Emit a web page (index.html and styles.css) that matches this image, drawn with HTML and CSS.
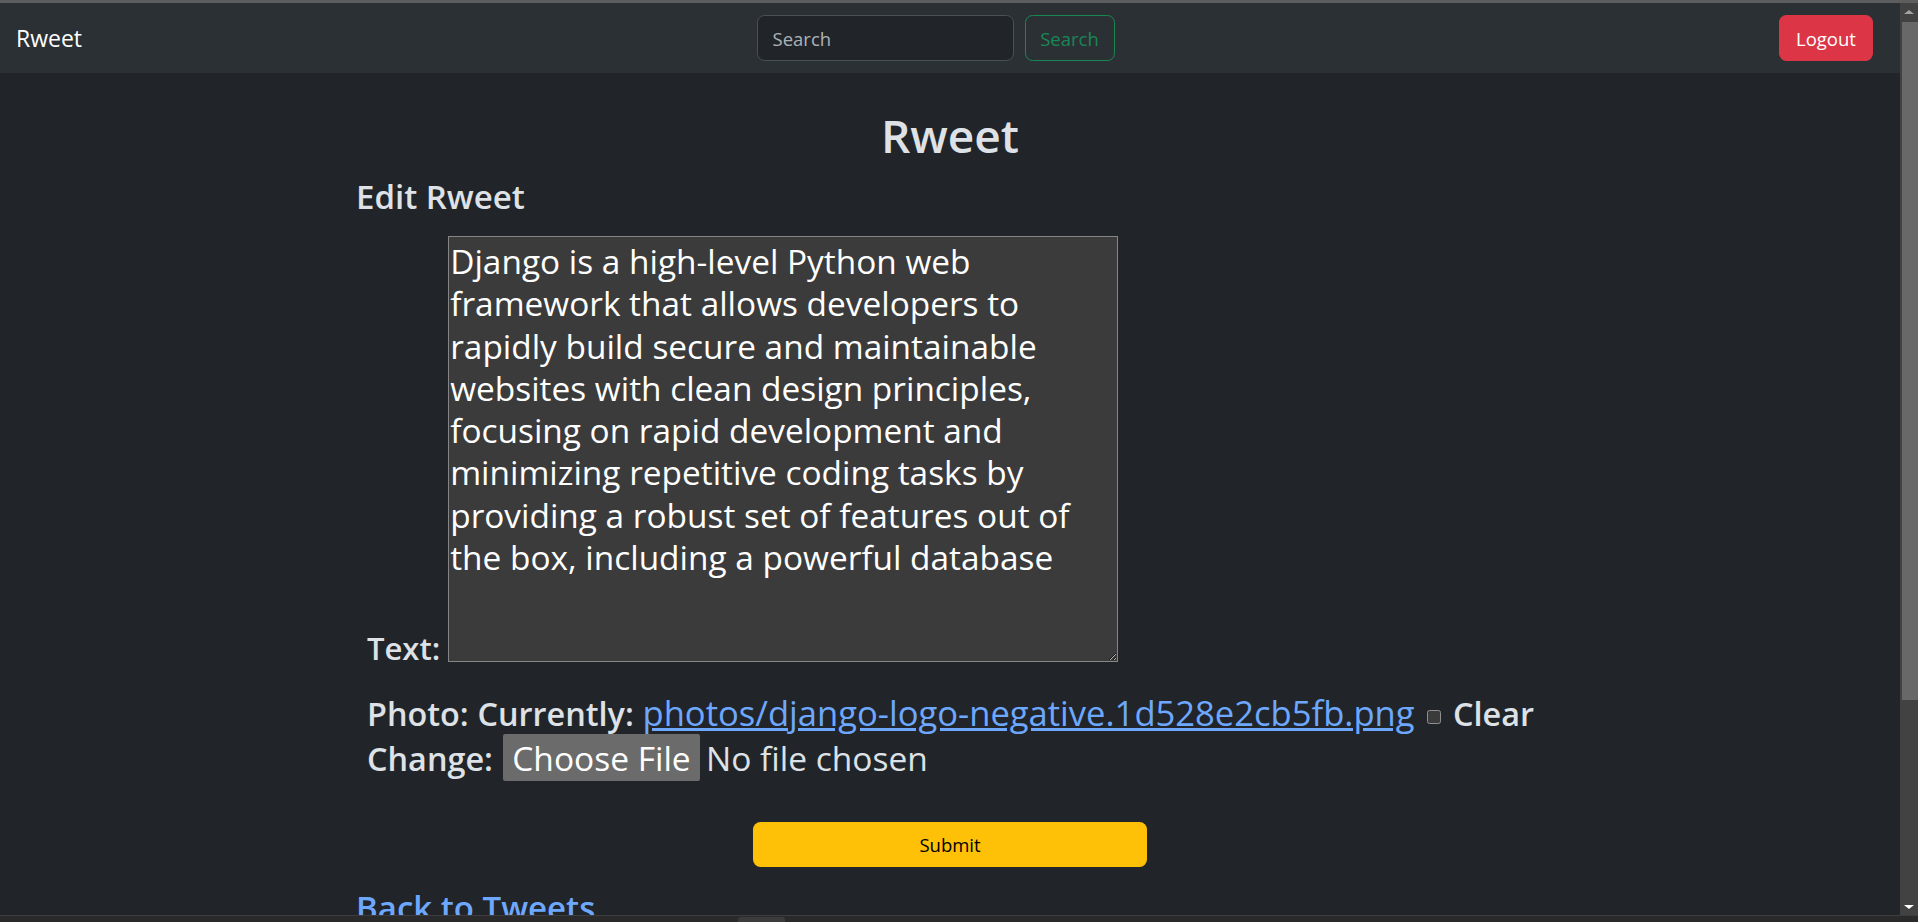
FILE: index.html
```html
<!DOCTYPE html>
<html lang="en">
<head>
<meta charset="utf-8">
<title>Rweet</title>
<link rel="stylesheet" href="styles.css">
</head>
<body>
<div class="screen">
  <div class="topline"></div>
  <div class="window">
    <div class="viewport">
      <nav class="navbar">
        <a class="brand" href="#">Rweet</a>
        <form class="search">
          <input class="search-input" type="text" placeholder="Search">
          <button class="search-btn" type="button">Search</button>
        </form>
        <button class="logout" type="button">Logout</button>
      </nav>
      <main class="page">
        <h1 class="heading">Rweet</h1>
        <h3 class="title">Edit Rweet</h3>
        <form class="edit-form">
          <div class="text-row">
            <label class="lbl" for="t">Text:</label>
            <textarea id="t" class="text-input">Django is a high-level Python web
framework that allows developers to
rapidly build secure and maintainable
websites with clean design principles,
focusing on rapid development and
minimizing repetitive coding tasks by
providing a robust set of features out of
the box, including a powerful database</textarea>
          </div>
          <div class="photo-line"><label class="lbl">Photo:</label> <span class="lbl">Currently:</span> <a class="file-link" href="#">photos/django-logo-negative.1d528e2cb5fb.png</a> <input class="clear-box" type="checkbox"> <label class="lbl">Clear</label></div>
          <div class="change-line">
            <span class="lbl">Change:</span>
            <span class="file-btn">Choose File</span>
            <span class="file-none">No file chosen</span>
          </div>
          <div class="submit-row">
            <button class="submit" type="button">Submit</button>
          </div>
        </form>
        <a class="back" href="#">Back to Tweets</a>
      </main>
    </div>
    <div class="scrollbar">
      <div class="sb-arrow sb-up"></div>
      <div class="sb-track"><div class="sb-thumb"></div></div>
      <div class="sb-arrow sb-down"></div>
    </div>
  </div>
  <div class="taskbar"><div class="task-tab"></div></div>
</div>
</body>
</html>
```

FILE: styles.css
```css
html, body {
  margin: 0;
  padding: 0;
  height: 100%;
  overflow: hidden;
  background: #212529;
}

.screen {
  width: 1918px;
  height: 922px;
  display: flex;
  flex-direction: column;
  font-family: "Open Sans", "Noto Sans", sans-serif;
}

.topline {
  flex: none;
  height: 3px;
  background: #5e5e5e;
}

.window {
  flex: 1;
  min-height: 0;
  display: flex;
}

.viewport {
  flex: 1;
  min-width: 0;
  overflow: hidden;
  background: #212529;
  color: #dee2e6;
}

/* navbar */
.navbar {
  height: 70px;
  background: #2b3035;
  display: flex;
  align-items: center;
  padding: 0 27px 0 16px;
}

.brand {
  font-size: 23px;
  line-height: 30px;
  color: #fff;
  text-decoration: none;
}

.search {
  display: flex;
  gap: 11px;
  margin: 0 auto;
  padding-left: 10px;
}

.search-input {
  width: 257px;
  height: 46px;
  box-sizing: border-box;
  background: #212529;
  border: 1px solid #495057;
  border-radius: 7.5px;
  padding: 0 15px;
  font-family: "Open Sans", sans-serif;
  font-size: 18.5px;
  color: #dee2e6;
  outline: none;
}

.search-input::placeholder {
  color: rgba(222, 226, 230, 0.75);
}

.search-btn {
  width: 90px;
  height: 46px;
  box-sizing: border-box;
  background: transparent;
  border: 1px solid #198754;
  border-radius: 7.5px;
  color: #198754;
  font-family: "Open Sans", sans-serif;
  font-size: 18.5px;
  padding: 0;
}

.logout {
  width: 94px;
  height: 46px;
  background: #dc3545;
  border: none;
  border-radius: 7.5px;
  color: #fff;
  font-family: "Open Sans", sans-serif;
  font-size: 18.5px;
  padding: 0;
}

/* page */
.page {
  width: 1188px;
  margin: 0 auto;
  padding-top: 32px;
}

.heading {
  margin: 0 0 12px;
  font-size: 46px;
  font-weight: 600;
  line-height: 60px;
  text-align: center;
}

.title {
  margin: 0 0 19px;
  font-size: 33px;
  font-weight: 600;
  line-height: 40px;
}

.edit-form {
  font-size: 33.5px;
  font-weight: 400;
}

.lbl {
  font-size: 32.4px;
  font-weight: 600;
}

.text-row {
  display: flex;
  align-items: flex-end;
  gap: 8px;
  margin-left: 11px;
}

.text-row .lbl {
  font-size: 31px;
  line-height: 28px;
}

.text-input {
  display: block;
  margin: 0;
  width: 670px;
  height: 426px;
  box-sizing: border-box;
  background: #3b3b3b;
  color: #fff;
  border: 1px solid #858585;
  padding: 3px 3px 2px 1px;
  font-family: "Open Sans", sans-serif;
  font-size: 33.4px;
  font-weight: 400;
  line-height: 42.3px;
  outline: none;
}

.photo-line {
  margin: 30px 0 0 11px;
  height: 42px;
  line-height: 42px;
  white-space: nowrap;
}

.file-link {
  color: #6ea8fe;
  font-size: 34.6px;
  font-weight: 400;
  text-decoration: underline;
}

.clear-box {
  appearance: none;
  -webkit-appearance: none;
  width: 14px;
  height: 14px;
  box-sizing: border-box;
  margin: 0 3px 2px 4px;
  vertical-align: baseline;
  background: #3b3b3b;
  border: 1px solid #8f8f8f;
  border-radius: 2.5px;
}

.change-line {
  margin-left: 11px;
  height: 47px;
  display: flex;
  align-items: center;
  line-height: 42px;
}

.file-btn {
  margin-left: 10px;
  width: 197px;
  height: 47px;
  background: #6b6b6b;
  color: #fff;
  font-weight: 400;
  border-radius: 2px;
  display: flex;
  align-items: center;
  justify-content: center;
}

.file-none {
  margin-left: 6px;
  font-weight: 400;
}

.submit-row {
  margin-top: 41px;
  display: flex;
  justify-content: center;
}

.submit {
  width: 394px;
  height: 45px;
  background: #ffc107;
  border: none;
  border-radius: 7.5px;
  color: #000;
  font-family: "Open Sans", sans-serif;
  font-size: 18.5px;
  padding: 0;
}

.back {
  display: block;
  margin-top: 21px;
  font-size: 33px;
  font-weight: 600;
  line-height: 40px;
  color: #6ea8fe;
  text-decoration: none;
}

/* scrollbar */
.scrollbar {
  flex: none;
  width: 18px;
  background: #424242;
  display: flex;
  flex-direction: column;
  align-items: center;
}

.sb-arrow {
  flex: none;
  height: 17px;
  width: 100%;
  display: flex;
  align-items: center;
  justify-content: center;
}

.sb-up::before {
  content: "";
  border-left: 5px solid transparent;
  border-right: 5px solid transparent;
  border-bottom: 4px solid #a3a3a3;
}

.sb-down::before {
  content: "";
  border-left: 5px solid transparent;
  border-right: 5px solid transparent;
  border-top: 4px solid #ffffff;
}

.sb-track {
  flex: 1;
  width: 100%;
  padding-top: 2px;
}

.sb-thumb {
  margin-left: 2px;
  width: 16px;
  height: 678px;
  background: #686868;
}

/* bottom strip */
.taskbar {
  flex: none;
  height: 7px;
  box-sizing: border-box;
  background: #2a2a2a;
  border-top: 1px solid #3d3d3d;
  position: relative;
}

.task-tab {
  position: absolute;
  left: 738px;
  top: 1px;
  width: 47px;
  height: 6px;
  background: #3c3c3c;
  border-radius: 3px 3px 0 0;
}
```
